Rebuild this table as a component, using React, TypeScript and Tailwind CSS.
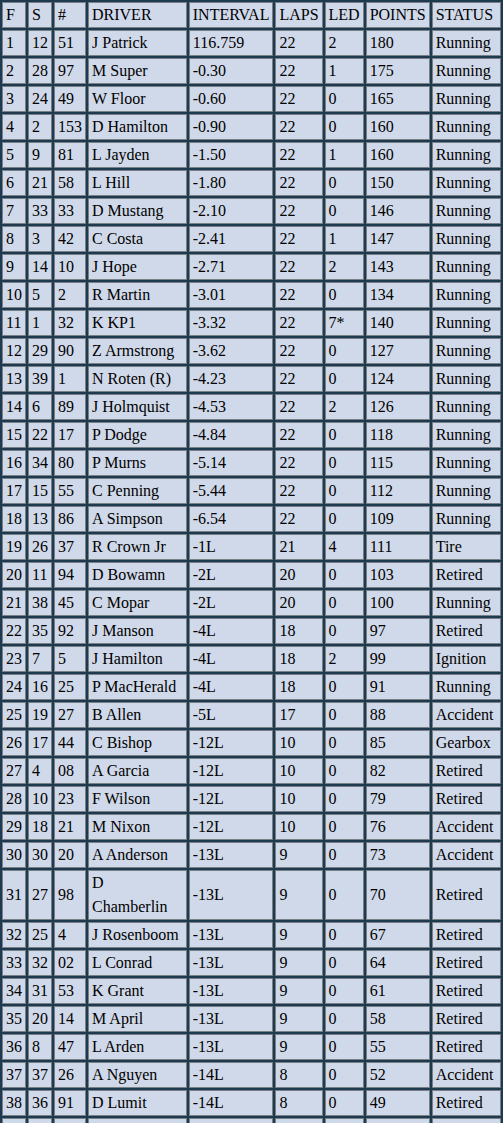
import React from "react";

// F, S, #, DRIVER, INTERVAL, LAPS, LED, POINTS, STATUS
const rows: string[][] = [
  ["1", "12", "51", "J Patrick", "116.759", "22", "2", "180", "Running"],
  ["2", "28", "97", "M Super", "-0.30", "22", "1", "175", "Running"],
  ["3", "24", "49", "W Floor", "-0.60", "22", "0", "165", "Running"],
  ["4", "2", "153", "D Hamilton", "-0.90", "22", "0", "160", "Running"],
  ["5", "9", "81", "L Jayden", "-1.50", "22", "1", "160", "Running"],
  ["6", "21", "58", "L Hill", "-1.80", "22", "0", "150", "Running"],
  ["7", "33", "33", "D Mustang", "-2.10", "22", "0", "146", "Running"],
  ["8", "3", "42", "C Costa", "-2.41", "22", "1", "147", "Running"],
  ["9", "14", "10", "J Hope", "-2.71", "22", "2", "143", "Running"],
  ["10", "5", "2", "R Martin", "-3.01", "22", "0", "134", "Running"],
  ["11", "1", "32", "K KP1", "-3.32", "22", "7*", "140", "Running"],
  ["12", "29", "90", "Z Armstrong", "-3.62", "22", "0", "127", "Running"],
  ["13", "39", "1", "N Roten (R)", "-4.23", "22", "0", "124", "Running"],
  ["14", "6", "89", "J Holmquist", "-4.53", "22", "2", "126", "Running"],
  ["15", "22", "17", "P Dodge", "-4.84", "22", "0", "118", "Running"],
  ["16", "34", "80", "P Murns", "-5.14", "22", "0", "115", "Running"],
  ["17", "15", "55", "C Penning", "-5.44", "22", "0", "112", "Running"],
  ["18", "13", "86", "A Simpson", "-6.54", "22", "0", "109", "Running"],
  ["19", "26", "37", "R Crown Jr", "-1L", "21", "4", "111", "Tire"],
  ["20", "11", "94", "D Bowamn", "-2L", "20", "0", "103", "Retired"],
  ["21", "38", "45", "C Mopar", "-2L", "20", "0", "100", "Running"],
  ["22", "35", "92", "J Manson", "-4L", "18", "0", "97", "Retired"],
  ["23", "7", "5", "J Hamilton", "-4L", "18", "2", "99", "Ignition"],
  ["24", "16", "25", "P MacHerald", "-4L", "18", "0", "91", "Running"],
  ["25", "19", "27", "B Allen", "-5L", "17", "0", "88", "Accident"],
  ["26", "17", "44", "C Bishop", "-12L", "10", "0", "85", "Gearbox"],
  ["27", "4", "08", "A Garcia", "-12L", "10", "0", "82", "Retired"],
  ["28", "10", "23", "F Wilson", "-12L", "10", "0", "79", "Retired"],
  ["29", "18", "21", "M Nixon", "-12L", "10", "0", "76", "Accident"],
  ["30", "30", "20", "A Anderson", "-13L", "9", "0", "73", "Accident"],
  ["31", "27", "98", "D Chamberlin", "-13L", "9", "0", "70", "Retired"],
  ["32", "25", "4", "J Rosenboom", "-13L", "9", "0", "67", "Retired"],
  ["33", "32", "02", "L Conrad", "-13L", "9", "0", "64", "Retired"],
  ["34", "31", "53", "K Grant", "-13L", "9", "0", "61", "Retired"],
  ["35", "20", "14", "M April", "-13L", "9", "0", "58", "Retired"],
  ["36", "8", "47", "L Arden", "-13L", "9", "0", "55", "Retired"],
  ["37", "37", "26", "A Nguyen", "-14L", "8", "0", "52", "Accident"],
  ["38", "36", "91", "D Lumit", "-14L", "8", "0", "49", "Retired"],
  ["39", "23", "18", "B Rodriguez", "-22L", "0", "0", "46", "Camshaft"],
];

const headers = ["F", "S", "#", "DRIVER", "INTERVAL", "LAPS", "LED", "POINTS", "STATUS"];

const cell =
  "h-[26px] border border-[#7a7f87] bg-[#d0d9ea] px-[3px] font-['Liberation_Serif',serif] text-[16px]";

export default function App() {
  return (
    <div className="min-h-screen bg-[#1d3a4e]">
      <table className="w-[503px] border-separate border-spacing-[2px] bg-[#1d3a4e] font-['Liberation_Serif',serif] text-[16px]">
        <tbody>
          <tr>
            {headers.map((h) => (
              <td key={h} className={cell}>
                {h}
              </td>
            ))}
          </tr>
          {rows.map((r) => (
            <tr key={r[0]}>
              {r.map((v, i) => (
                <td key={i} className={cell}>
                  {v}
                </td>
              ))}
            </tr>
          ))}
        </tbody>
      </table>
    </div>
  );
}
